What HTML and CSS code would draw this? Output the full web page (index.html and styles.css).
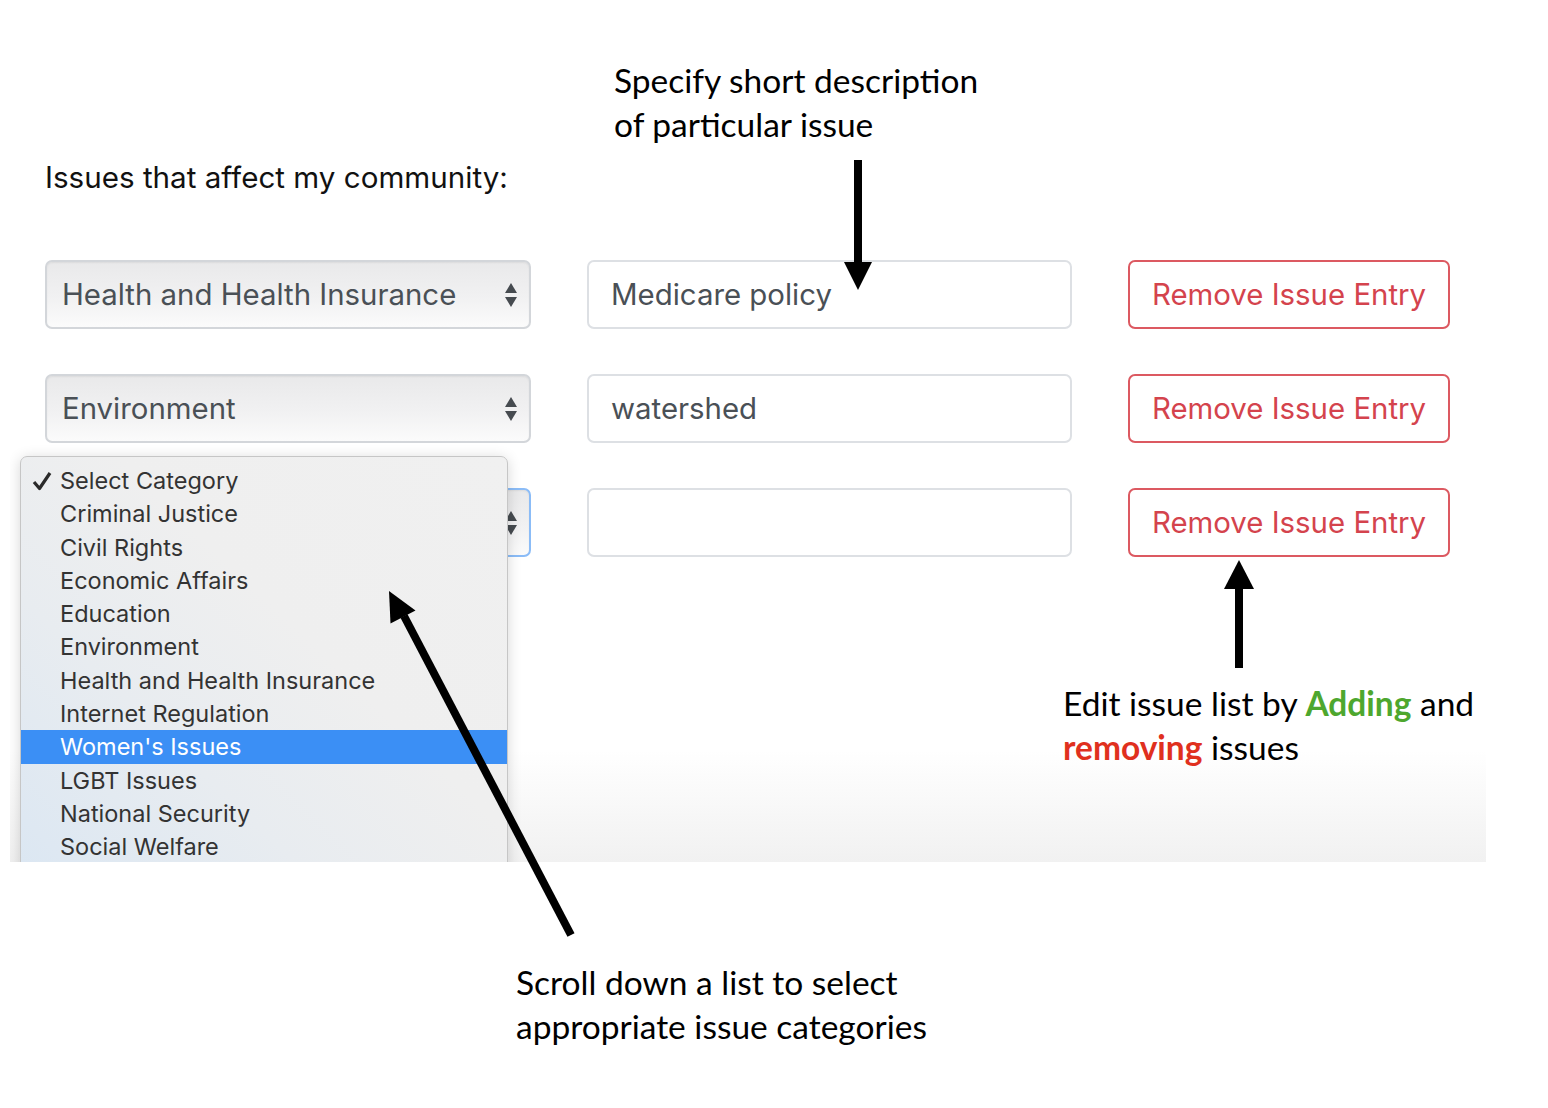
FILE: index.html
```html
<!DOCTYPE html>
<html lang="en">
<head>
<meta charset="utf-8">
<title>Issues that affect my community</title>
<link rel="stylesheet" href="styles.css">
</head>
<body>
<div class="page">
  <div class="shot">
    <h1 class="title">Issues that affect my community:</h1>
    <div class="rows">
      <div class="row">
        <div class="select"><span class="select-text">Health and Health Insurance</span><svg class="updown" viewBox="0 0 12 24" width="12" height="24"><polygon points="6,0 12,10 0,10"/><polygon points="0,14 12,14 6,24"/></svg></div>
        <div class="input">Medicare policy</div>
        <div class="btn">Remove Issue Entry</div>
      </div>
      <div class="row">
        <div class="select"><span class="select-text">Environment</span><svg class="updown" viewBox="0 0 12 24" width="12" height="24"><polygon points="6,0 12,10 0,10"/><polygon points="0,14 12,14 6,24"/></svg></div>
        <div class="input">watershed</div>
        <div class="btn">Remove Issue Entry</div>
      </div>
      <div class="row">
        <div class="select focus"><span class="select-text"></span><svg class="updown" viewBox="0 0 12 24" width="12" height="24"><polygon points="6,0 12,10 0,10"/><polygon points="0,14 12,14 6,24"/></svg></div>
        <div class="input"></div>
        <div class="btn">Remove Issue Entry</div>
      </div>
    </div>

    <ul class="menu">
      <li class="menu-item checked"><svg class="check" viewBox="0 0 20 20" width="20" height="20"><polyline points="2,11 7.5,17.5 18,2"/></svg>Select Category</li>
      <li class="menu-item">Criminal Justice</li>
      <li class="menu-item">Civil Rights</li>
      <li class="menu-item">Economic Affairs</li>
      <li class="menu-item">Education</li>
      <li class="menu-item">Environment</li>
      <li class="menu-item">Health and Health Insurance</li>
      <li class="menu-item">Internet Regulation</li>
      <li class="menu-item active">Women's Issues</li>
      <li class="menu-item">LGBT Issues</li>
      <li class="menu-item">National Security</li>
      <li class="menu-item">Social Welfare</li>
    </ul>
  </div>

  <p class="note note-desc">Specify short description<br>of particular issue</p>
  <p class="note note-edit">Edit issue list by <b class="green">Adding</b> and<br><b class="red">removing</b> issues</p>
  <p class="note note-scroll">Scroll down a list to select<br>appropriate issue categories</p>

  <svg class="arrows" width="1548" height="1108" viewBox="0 0 1548 1108">
    <rect x="854" y="160" width="8" height="104"/>
    <polygon points="844,262 872,262 858,290"/>
    <polygon points="1239,560 1224,589 1254,589"/>
    <rect x="1235" y="587" width="8" height="81"/>
    <line x1="571" y1="935" x2="404" y2="616" stroke="#000" stroke-width="8"/>
    <polygon points="389,591 415.5,610.5 390.5,623.5"/>
  </svg>
</div>
</body>
</html>
```

FILE: styles.css
```css
* { box-sizing: border-box; }

html, body {
  margin: 0;
  padding: 0;
  background: #ffffff;
}

.page {
  position: relative;
  width: 1548px;
  height: 1108px;
  overflow: hidden;
}

.shot {
  position: relative;
  margin-left: 10px;
  width: 1476px;
  height: 862px;
  overflow: hidden;
  padding: 157px 0 0 35px;
  background: linear-gradient(to bottom, #ffffff 0%, #ffffff 87%, #f1f1f1 100%);
  font-family: "Inter", "Liberation Sans", sans-serif;
}

.title {
  margin: 0;
  font-size: 29.6px;
  line-height: 40px;
  font-weight: 400;
  color: #111111;
}

.rows {
  margin-top: 63px;
  display: flex;
  flex-direction: column;
  gap: 45px;
}

.row {
  display: grid;
  grid-template-columns: 486px 485px 322px;
  column-gap: 56px;
  height: 69px;
}

.select {
  display: flex;
  align-items: center;
  justify-content: space-between;
  padding: 0 12px 0 15px;
  border: 2px solid #d3d6da;
  border-radius: 7px;
  background: linear-gradient(to bottom, #e9e9ea 0%, #f1f1f2 55%, #fbfbfb 100%);
  box-shadow: inset 0 1px 2px rgba(0,0,0,0.06);
  color: #4a5056;
  font-size: 29.4px;
}

.select.focus {
  border-color: #8bbcf7;
}

.updown { fill: #464b50; flex: none; }

.input {
  display: flex;
  align-items: center;
  padding: 0 22px;
  border: 2px solid #dde0e4;
  border-radius: 7px;
  background: #ffffff;
  color: #4a5056;
  font-size: 29.4px;
}

.btn {
  display: flex;
  align-items: center;
  justify-content: center;
  border: 2px solid #dc5961;
  border-radius: 7px;
  background: #ffffff;
  color: #d4434d;
  font-size: 29.4px;
}

.menu {
  position: absolute;
  left: 10px;
  top: 456px;
  width: 488px;
  height: 470px;
  margin: 0;
  padding: 7px 0 0 0;
  list-style: none;
  border: 1px solid #c6c6c6;
  border-radius: 7px;
  background: linear-gradient(to top right, #d9e6f3 0%, #e8ecf0 35%, #efefef 60%, #f0f0f0 100%);
  box-shadow: 0 2px 14px rgba(0,0,0,0.16);
}

.menu-item {
  position: relative;
  height: 33.3px;
  line-height: 33.3px;
  padding-left: 39px;
  font-size: 23.5px;
  color: #333333;
}

.menu-item.active {
  background: #3b8ff5;
  color: #ffffff;
}

.check {
  position: absolute;
  left: 11px;
  top: 7px;
  fill: none;
  stroke: #2a2a2a;
  stroke-width: 3.2;
  stroke-linejoin: round;
}

.note {
  position: absolute;
  margin: 0;
  font-family: "Lato", "Open Sans", sans-serif;
  font-size: 33.5px;
  line-height: 44px;
  color: #000000;
}

.note b { font-weight: 700; }
.green { color: #4ea72e; }
.red { color: #e0301e; }

.note-desc { left: 614px; top: 58px; }
.note-edit { left: 1063px; top: 681px; }
.note-scroll { left: 516px; top: 960px; }

.arrows {
  position: absolute;
  left: 0;
  top: 0;
  pointer-events: none;
  fill: #000000;
}
```
